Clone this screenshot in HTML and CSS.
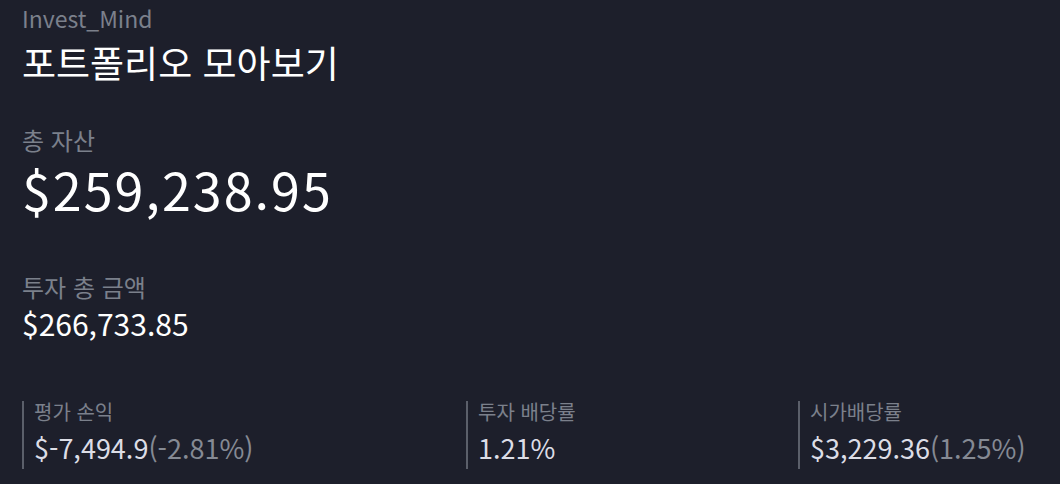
FILE: index.html
```html
<!DOCTYPE html>
<html lang="ko">
<head>
    <meta charset="UTF-8">
    <meta name="viewport" content="width=device-width, initial-scale=1.0">
    <title>Invest_Mind</title>
    <link rel="stylesheet" href="styles.css">
</head>
<body>
    <div class="page">
        <div class="brand">Invest_Mind</div>
        <h1 class="title">포트폴리오 모아보기</h1>

        <div class="block total">
            <div class="label">총 자산</div>
            <div class="big-value">$259,238.95</div>
        </div>

        <div class="block invested">
            <div class="label">투자 총 금액</div>
            <div class="value">$266,733.85</div>
        </div>

        <div class="stats">
            <div class="stat">
                <div class="stat-label">평가 손익</div>
                <div class="stat-value">$-7,494.9<span class="sub">(-2.81%)</span></div>
            </div>
            <div class="stat">
                <div class="stat-label">투자 배당률</div>
                <div class="stat-value">1.21%</div>
            </div>
            <div class="stat">
                <div class="stat-label">시가배당률</div>
                <div class="stat-value">$3,229.36<span class="sub">(1.25%)</span></div>
            </div>
        </div>
    </div>
</body>
</html>
```

FILE: styles.css
```css
body {
    margin: 0;
    background-color: #1d1f2b;
    color: #fff;
    font-family: "Noto Sans CJK KR", "Noto Sans", sans-serif;
}
.page {
    padding: 3px 22px 0;
}
.brand {
    font-size: 23px;
    line-height: 30px;
    color: #7b808b;
}
.title {
    margin: 7px 0 0;
    font-size: 37px;
    font-weight: 400;
    line-height: 44px;
}
.label {
    font-size: 24px;
    line-height: 32px;
    color: #7b808b;
}
.total {
    margin-top: 40px;
}
.big-value {
    font-size: 52px;
    line-height: 66px;
    letter-spacing: 2px;
}
.invested {
    margin-top: 49px;
}
.value {
    font-size: 30px;
    line-height: 40px;
}
.stats {
    display: grid;
    grid-template-columns: 444px 332px 1fr;
    margin-top: 58px;
}
.stat {
    border-left: 2px solid #5b5f6a;
    padding-left: 10px;
}
.stat-label {
    font-size: 20px;
    line-height: 22px;
    color: #7b808b;
}
.stat-value {
    margin-top: 4px;
    font-size: 27px;
    line-height: 42px;
    color: #dcdde6;
}
.sub {
    color: #858a94;
}
```
